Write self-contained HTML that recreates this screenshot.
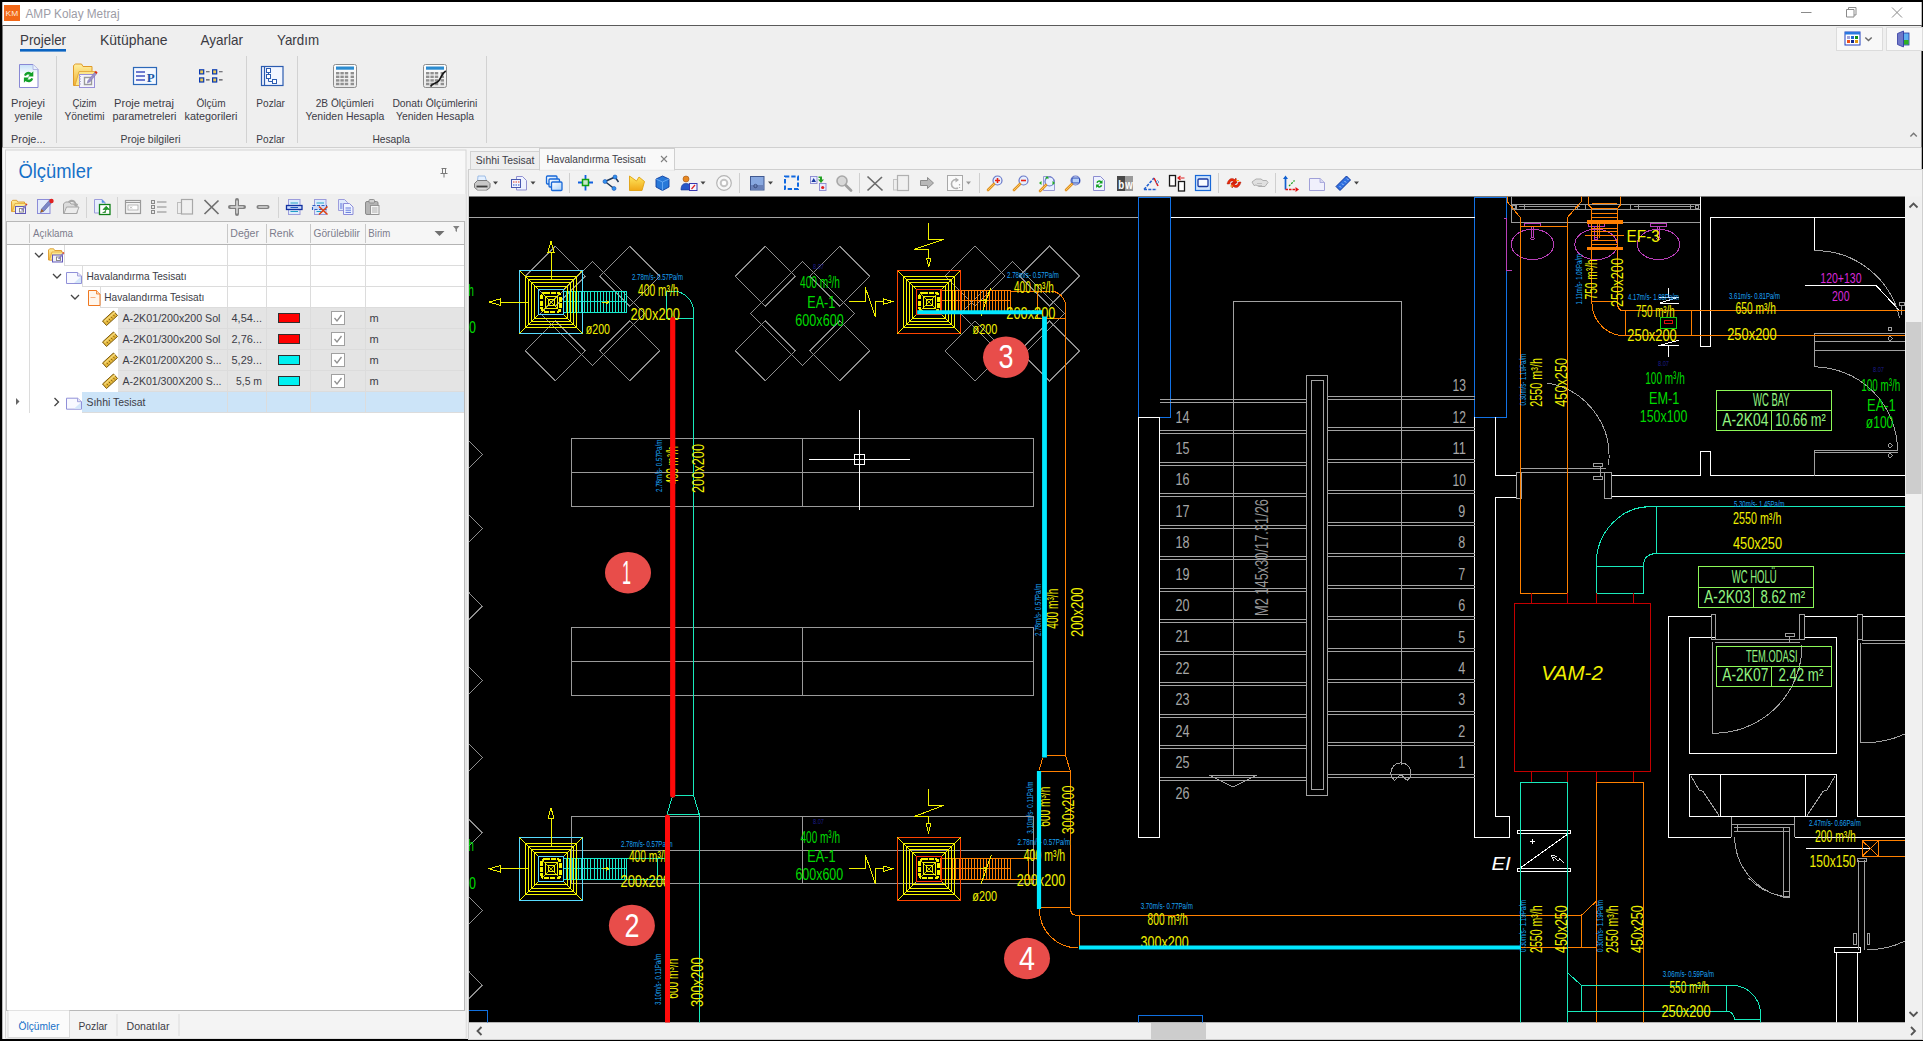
<!DOCTYPE html>
<html lang="tr"><head><meta charset="utf-8"><title>AMP Kolay Metraj</title>
<style>
html,body{margin:0;padding:0;background:#000;overflow:hidden}
body{width:1923px;height:1041px;position:relative;font-family:"Liberation Sans",sans-serif}
svg{position:absolute;left:0;top:0;display:block}
text{font-family:"Liberation Sans",sans-serif;white-space:pre}
.ui{font-size:11px;fill:#3c3c46}
.tab{font-size:14.5px;fill:#3a3a42}
.hd{font-size:11px;fill:#7c7c8c}
.c{font-size:14px}
.y{fill:#e8e800}.g{fill:#00d000}.b{fill:#1496e6}.w{fill:#a8a8a8}.m{fill:#d020d0}
</style></head><body>
<svg width="1923" height="1041" viewBox="0 0 1923 1041" shape-rendering="auto">
<!-- ===== window frame / title bar ===== -->
<rect x="0" y="0" width="1923" height="1041" fill="#000"/>
<rect x="2.5" y="2" width="1919" height="1037" fill="#efefef"/>
<rect x="2.5" y="2" width="1919" height="23" fill="#fff"/>
<rect x="2.5" y="25" width="1919" height="1" fill="#5a5a5a"/>
<rect x="4" y="5" width="16" height="16" fill="#f26818"/>
<text x="5.6" y="16.4" font-size="8" fill="#ffe9d8" textLength="12.6" lengthAdjust="spacingAndGlyphs">KM</text>
<text x="25.5" y="18" font-size="12" fill="#9c9ca6" textLength="94" lengthAdjust="spacingAndGlyphs">AMP Kolay Metraj</text>
<g stroke="#8a8a8a" stroke-width="1" fill="none">
<path d="M1801 12.5h10.5"/>
<path d="M1846.5 9.5h7.5v7.5h-7.5zM1848.5 9.5v-2h7.5v7.5h-2"/>
<path d="M1892 7.5l10 10M1902 7.5l-10 10"/>
</g>
<!-- top-right buttons -->
<rect x="1836.5" y="27.5" width="46" height="23" fill="#f8f8f8" stroke="#dcdcdc"/>
<rect x="1886.5" y="27.5" width="36" height="23" fill="#f8f8f8" stroke="#dcdcdc"/>
<rect x="1845" y="32" width="15" height="13" fill="#fff" stroke="#2040c0" stroke-width="1"/>
<rect x="1845" y="32" width="15" height="2.5" fill="#2a78e0"/>
<rect x="1847" y="36" width="3" height="3" fill="#a0a0d8"/><rect x="1851" y="36" width="3" height="3" fill="#2068d0"/><rect x="1855" y="36" width="3" height="3" fill="#109018"/>
<rect x="1847" y="40" width="3" height="3" fill="#f05018"/><rect x="1851" y="40" width="3" height="3" fill="#102890"/><rect x="1855" y="40" width="3" height="3" fill="#e09810"/>
<path d="M1865.3 37.5l3.2 3 3.2-3" stroke="#6a6a6a" stroke-width="1.5" fill="none"/>
<path d="M1897.5 33.5l6-2.5v16l-6-2.5z" fill="#7078c8" stroke="#3038a0" stroke-width=".8"/>
<rect x="1903.5" y="33" width="5.5" height="12" fill="#60b0f0" stroke="#2838a0" stroke-width=".8"/>
<rect x="1904" y="40" width="4.6" height="4.5" fill="#30b020"/>
<path d="M1910.4 133.5l3.2 3.2 3.2-3.2" transform="rotate(180 1913.6 135)" stroke="#777" stroke-width="1.4" fill="none"/>
<!-- ===== ribbon tabs ===== -->
<text class="tab" x="20" y="44.800" textLength="46" lengthAdjust="spacingAndGlyphs">Projeler</text>
<rect x="20" y="49" width="46" height="2.6" fill="#0a64c2"/>
<text class="tab" x="100" y="44.800" textLength="67.5" lengthAdjust="spacingAndGlyphs">Kütüphane</text>
<text class="tab" x="200.5" y="44.800" textLength="42.5" lengthAdjust="spacingAndGlyphs">Ayarlar</text>
<text class="tab" x="277" y="44.800" textLength="42" lengthAdjust="spacingAndGlyphs">Yardım</text>
<!-- ribbon separators -->
<g fill="#d2d2d2">
<rect x="56" y="56" width="1" height="87"/><rect x="246" y="56" width="1" height="87"/>
<rect x="297" y="56" width="1" height="87"/><rect x="486" y="56" width="1" height="87"/>
</g>
<rect x="2.5" y="147" width="1919" height="1" fill="#d0d0d0"/>
<rect x="2.5" y="148" width="1919" height="22" fill="#f4f4f4"/>
<!-- ribbon labels -->
<g class="ui">
<text x="11" y="107" textLength="34" lengthAdjust="spacingAndGlyphs">Projeyi</text>
<text x="14.5" y="120" textLength="28" lengthAdjust="spacingAndGlyphs">yenile</text>
<text x="11" y="143" textLength="34.5" lengthAdjust="spacingAndGlyphs">Proje...</text>
<text x="72.5" y="107" textLength="24" lengthAdjust="spacingAndGlyphs">Çizim</text>
<text x="64.5" y="120" textLength="40" lengthAdjust="spacingAndGlyphs">Yönetimi</text>
<text x="114" y="107" textLength="60" lengthAdjust="spacingAndGlyphs">Proje metraj</text>
<text x="112.5" y="120" textLength="64" lengthAdjust="spacingAndGlyphs">parametreleri</text>
<text x="196.5" y="107" textLength="29" lengthAdjust="spacingAndGlyphs">Ölçüm</text>
<text x="184.5" y="120" textLength="53" lengthAdjust="spacingAndGlyphs">kategorileri</text>
<text x="120.5" y="143" textLength="60" lengthAdjust="spacingAndGlyphs">Proje bilgileri</text>
<text x="256.3" y="107" textLength="28.6" lengthAdjust="spacingAndGlyphs">Pozlar</text>
<text x="256.3" y="143" textLength="28.6" lengthAdjust="spacingAndGlyphs">Pozlar</text>
<text x="315.7" y="107" textLength="58" lengthAdjust="spacingAndGlyphs">2B Ölçümleri</text>
<text x="305.5" y="120" textLength="78.8" lengthAdjust="spacingAndGlyphs">Yeniden Hesapla</text>
<text x="392.4" y="107" textLength="85" lengthAdjust="spacingAndGlyphs">Donatı Ölçümlerini</text>
<text x="396" y="120" textLength="78" lengthAdjust="spacingAndGlyphs">Yeniden Hesapla</text>
<text x="372.4" y="143" textLength="37.6" lengthAdjust="spacingAndGlyphs">Hesapla</text>
</g>
<!-- ===== ribbon icons ===== -->
<defs>
<linearGradient id="gdoc" x1="0" y1="0" x2="0" y2="1"><stop offset="0" stop-color="#c4e0f8"/><stop offset=".45" stop-color="#fff"/><stop offset="1" stop-color="#fff"/></linearGradient>
<linearGradient id="gfold" x1="0" y1="0" x2="0" y2="1"><stop offset="0" stop-color="#fff0a0"/><stop offset="1" stop-color="#f0b030"/></linearGradient>
<linearGradient id="gtab" x1="0" y1="0" x2="0" y2="1"><stop offset="0" stop-color="#fff"/><stop offset="1" stop-color="#e8e8e8"/></linearGradient>
</defs>
<!-- projeyi yenile -->
<path d="M19.5 64.5h13.5l5 5v18h-18.5z" fill="url(#gdoc)" stroke="#8888d4" stroke-width="1"/>
<path d="M33 64.5v5h5" fill="#e8f2fc" stroke="#a8a8e0" stroke-width=".8"/>
<path d="M24 75.2a4.6 4.6 0 0 1 7.6-2.2l1.7-1.7v5.3h-5.3l1.8-1.8a2.6 2.6 0 0 0-3.8 1.2z" fill="#12a028"/>
<path d="M33.2 78.8a4.6 4.6 0 0 1-7.6 2.2l-1.7 1.7v-5.3h5.3l-1.8 1.8a2.6 2.6 0 0 0 3.8-1.2z" fill="#12a028"/>
<!-- cizim yonetimi -->
<path d="M73.5 85.5v-20l2-1.5h6l1.5 2.5h9v19z" fill="url(#gfold)" stroke="#e09a28" stroke-width="1"/>
<path d="M75 85.5l4-14h16l-4 14z" fill="#fbe68c" stroke="#e0a030" stroke-width=".8"/>
<rect x="79.5" y="74.5" width="15" height="13" fill="#f4f4fa" stroke="#9a90d8" stroke-width="1"/>
<path d="M79 76.5h2M79 79h2M79 81.500h2M79 84h2" stroke="#b0a8d0" stroke-width="1"/>
<path d="M84.500 77.500h7v7h-7z" fill="#fff" stroke="#9a9a9a" stroke-width="1.400"/>
<path d="M88 80.500l7-8.500 1.800 1.600-7 8.500-2.600 1z" fill="#9a90c8" stroke="#7a70b0" stroke-width=".5"/>
<path d="M94.600 72.300l1.200-1.500 1.800 1.600-1.200 1.500z" fill="#e03010"/>
<!-- proje metraj parametreleri -->
<rect x="133.500" y="67.500" width="23" height="17" fill="#f4f8ff" stroke="#2c68b8" stroke-width="1.200"/>
<path d="M136 72h9M136 76h9M136 80h9" stroke="#4050c0" stroke-width="1.600"/>
<text x="146.800" y="81.800" style="font-family:'Liberation Serif',serif;font-weight:bold" font-size="13" fill="#1858a8">P</text>
<!-- olcum kategorileri -->
<g>
<rect x="199" y="69.200" width="5.300" height="5.300" fill="#0838b0"/><rect x="200.200" y="70.400" width="2.900" height="2.900" fill="#e8c858"/>
<rect x="212" y="69.200" width="5.300" height="5.300" fill="#0838b0"/><rect x="213.200" y="70.400" width="2.900" height="2.900" fill="#e8c858"/>
<rect x="199" y="77.300" width="5.300" height="5.300" fill="#0838b0"/><rect x="200.200" y="78.500" width="2.900" height="2.900" fill="#e8c858"/>
<rect x="212" y="77.300" width="5.300" height="5.300" fill="#0838b0"/><rect x="213.200" y="78.500" width="2.900" height="2.900" fill="#e8c858"/>
<path d="M206 71.800h3.600M219 71.800h3.600M206 79.900h3.600M219 79.900h3.600" stroke="#505058" stroke-width="1.100"/>
</g>
<!-- pozlar -->
<rect x="261.500" y="66.500" width="21.500" height="19" fill="#f2f6ff" stroke="#2c5cb0" stroke-width="1.200"/>
<path d="M264.500 66.500v19" stroke="#2c5cb0" stroke-width="1.200"/>
<g fill="#fff" stroke="#2c5cb0" stroke-width="1"><rect x="266.500" y="68.500" width="4" height="4"/><rect x="266.500" y="74.500" width="4" height="4"/><rect x="272.500" y="79.500" width="4" height="4"/></g>
<path d="M268.500 72.500v2M268.500 78.500v3h4" stroke="#2c5cb0" stroke-width="1" fill="none"/>
<!-- 2B olcumleri -->
<g id="tbl">
<rect x="333.500" y="64.500" width="23" height="23" rx="2" fill="url(#gtab)" stroke="#8c8c8c" stroke-width="1"/>
<rect x="336" y="66.500" width="18" height="3.200" fill="#2c8cd0"/>
<g fill="#909090">
<rect x="336" y="72" width="3.400" height="2.400"/><rect x="340.400" y="72" width="3.400" height="2.400"/><rect x="344.800" y="72" width="3.400" height="2.400"/><rect x="350.600" y="72" width="3.400" height="2.400"/>
<rect x="336" y="75.600" width="3.400" height="2.400"/><rect x="340.400" y="75.600" width="3.400" height="2.400"/><rect x="344.800" y="75.600" width="3.400" height="2.400"/><rect x="350.600" y="75.600" width="3.400" height="2.400"/>
<rect x="336" y="79.200" width="3.400" height="2.400"/><rect x="340.400" y="79.200" width="3.400" height="2.400"/><rect x="344.800" y="79.200" width="3.400" height="2.400"/><rect x="350.600" y="79.200" width="3.400" height="2.400"/>
<rect x="336" y="82.800" width="3.400" height="2.400"/><rect x="340.400" y="82.800" width="3.400" height="2.400"/><rect x="344.800" y="82.800" width="3.400" height="2.400"/><rect x="350.600" y="82.800" width="3.400" height="2.400"/>
</g></g>
<use href="#tbl" x="90"/>
<path d="M430.500 86.500c2.500-4 6-2.500 8.500-6s3-7.500 6.800-9.500" stroke="#181818" stroke-width="1.700" fill="none"/>
<!-- ===== left panel ===== -->
<rect x="2.5" y="148" width="3.500" height="891" fill="#fafafa"/>
<rect x="5.500" y="150" width="460.500" height="888" fill="#f8f8f8" stroke="#d4d4d4" stroke-width="1"/>
<text x="18.500" y="177.500" font-size="20" fill="#1670c8" textLength="73.500" lengthAdjust="spacingAndGlyphs">Ölçümler</text>
<path d="M441.500 168.500h5M442.500 168.500v4.500M445.500 168.500v4.500M440.500 173.500h7M444 173.500v4" stroke="#7a7a7a" stroke-width="1" fill="none"/>
<rect x="6" y="194" width="459.500" height="27" fill="#efefef"/>
<rect x="6.500" y="221.500" width="458" height="789" fill="#fff" stroke="#b8b8b8" stroke-width="1"/>
<rect x="7" y="222" width="457" height="22" fill="#f6f6f6"/>
<rect x="7" y="244" width="457" height="1" fill="#b4b4b4"/>
<g fill="#c8c8c8">
<rect x="29" y="224" width="1" height="19"/><rect x="227" y="224" width="1" height="19"/><rect x="266" y="224" width="1" height="19"/><rect x="310" y="224" width="1" height="19"/><rect x="365" y="224" width="1" height="19"/>
</g>
<g class="hd">
<text x="33" y="237" textLength="40" lengthAdjust="spacingAndGlyphs">Açıklama</text>
<text x="230.300" y="237" textLength="28.700" lengthAdjust="spacingAndGlyphs">Değer</text>
<text x="269.300" y="237" textLength="24.500" lengthAdjust="spacingAndGlyphs">Renk</text>
<text x="313.500" y="237" textLength="46.500" lengthAdjust="spacingAndGlyphs">Görülebilir</text>
<text x="368.300" y="237" textLength="22" lengthAdjust="spacingAndGlyphs">Birim</text>
</g>
<path d="M434.500 231h10l-5 5z" fill="#707070"/>
<path d="M453 226h6.500l-2.500 3v3l-1.500-1v-2z" fill="#808080"/>
<!-- row backgrounds -->
<rect x="118" y="308" width="346" height="84" fill="#e4e4e4"/>
<rect x="82" y="392" width="382" height="21" fill="#cce4f8"/>
<!-- grid lines -->
<g fill="#dcdcdc">
<rect x="64" y="265" width="400" height="1"/><rect x="82" y="286" width="382" height="1"/><rect x="100" y="307" width="364" height="1"/>
<rect x="118" y="328" width="346" height="1"/><rect x="118" y="349" width="346" height="1"/><rect x="118" y="370" width="346" height="1"/><rect x="118" y="391" width="346" height="1"/>
<rect x="82" y="412" width="382" height="1"/>
<rect x="227" y="245" width="1" height="168"/><rect x="266" y="245" width="1" height="168"/><rect x="310" y="245" width="1" height="168"/><rect x="365" y="245" width="1" height="168"/>
<rect x="29" y="245" width="1" height="168"/>
<rect x="64" y="245" width="1" height="21"/><rect x="82" y="266" width="1" height="21"/><rect x="100" y="287" width="1" height="21"/>
</g>
<!-- chevrons -->
<g stroke="#444" stroke-width="1.300" fill="none">
<path d="M35 253l4 4 4-4"/><path d="M53 274l4 4 4-4"/><path d="M71 295l4 4 4-4"/><path d="M54.500 398l4 4-4 4"/>
</g>
<path d="M16 398l3.500 3.500-3.500 3.500z" fill="#666"/>
<!-- row text -->
<g class="ui" fill="#32323c">
<text x="86.500" y="280" textLength="100" lengthAdjust="spacingAndGlyphs">Havalandırma Tesisatı</text>
<text x="104.300" y="301" textLength="100" lengthAdjust="spacingAndGlyphs">Havalandırma Tesisatı</text>
<text x="122.500" y="322" textLength="98" lengthAdjust="spacingAndGlyphs">A-2K01/200x200 Sol</text>
<text x="122.500" y="343" textLength="98" lengthAdjust="spacingAndGlyphs">A-2K01/300x200 Sol</text>
<text x="122.500" y="364" textLength="99" lengthAdjust="spacingAndGlyphs">A-2K01/200X200 S...</text>
<text x="122.500" y="385" textLength="99" lengthAdjust="spacingAndGlyphs">A-2K01/300X200 S...</text>
<text x="86.500" y="406" textLength="59" lengthAdjust="spacingAndGlyphs">Sıhhi Tesisat</text>
<text x="231.500" y="322" textLength="30.500" lengthAdjust="spacingAndGlyphs">4,54...</text>
<text x="231.500" y="343" textLength="30.500" lengthAdjust="spacingAndGlyphs">2,76...</text>
<text x="231.500" y="364" textLength="30.500" lengthAdjust="spacingAndGlyphs">5,29...</text>
<text x="236" y="385" textLength="26" lengthAdjust="spacingAndGlyphs">5,5 m</text>
<text x="369.500" y="322">m</text><text x="369.500" y="343">m</text><text x="369.500" y="364">m</text><text x="369.500" y="385">m</text>
</g>
<!-- swatches -->
<g stroke="#303030" stroke-width="1">
<rect x="278.500" y="313.500" width="21" height="9" fill="#ff0000"/><rect x="278.500" y="334.500" width="21" height="9" fill="#ff0000"/>
<rect x="278.500" y="355.500" width="21" height="9" fill="#00f0f0"/><rect x="278.500" y="376.500" width="21" height="9" fill="#00f0f0"/>
</g>
<!-- checkboxes -->
<g id="cb"><rect x="331.500" y="311.500" width="13" height="13" fill="#fff" stroke="#a0a0a0"/><path d="M334.500 318l2.500 3 4.500-6" stroke="#909090" stroke-width="1.300" fill="none"/></g>
<use href="#cb" y="21"/><use href="#cb" y="42"/><use href="#cb" y="63"/>
<!-- bottom tabs -->
<rect x="6" y="1011" width="459.500" height="27" fill="#f4f4f4"/>
<rect x="8" y="1011" width="61.500" height="26.500" fill="#fbfbfb" stroke="#dadada" stroke-width="1"/>
<rect x="8.500" y="1010.500" width="60.500" height="2" fill="#fbfbfb"/>
<rect x="116.500" y="1014" width="1" height="22" fill="#dcdcdc"/><rect x="178.500" y="1014" width="1" height="22" fill="#dcdcdc"/>
<text class="ui" x="18.500" y="1029.500" fill="#1670c8" style="fill:#1670c8" textLength="40.800" lengthAdjust="spacingAndGlyphs">Ölçümler</text>
<text class="ui" x="78.500" y="1029.500" textLength="29" lengthAdjust="spacingAndGlyphs">Pozlar</text>
<text class="ui" x="126.500" y="1029.500" textLength="43" lengthAdjust="spacingAndGlyphs">Donatılar</text>
<!-- ===== left panel toolbar icons ===== -->
<defs>
<g id="fold16"><path d="M.5 12.500v-10l1.200-1.200h4l1 1.700h6.800v9.500z" fill="url(#gfold)" stroke="#dc9828" stroke-width=".9"/>
<path d="M1.500 12.500l2.500-8h11l-2.500 8z" fill="#fbe890" stroke="#e0a030" stroke-width=".7"/>
<rect x="4.500" y="7.500" width="10" height="7" fill="#f0f0fa" stroke="#6058b8" stroke-width="1"/>
<rect x="8.500" y="9.500" width="4" height="3.500" fill="#fff" stroke="#808080" stroke-width=".9"/>
<path d="M10 11l4.500-5.500 1.300 1-4.500 5.500z" fill="#8a80c0"/><path d="M14.400 5.500l.8-1 1.300 1-.8 1z" fill="#e03818"/></g>
<g id="page16"><path d="M.5.5h11l4 3.500v7.500h-15z" fill="#f8f9ff" stroke="#9090d8" stroke-width="1"/><path d="M8 11l7-6.500v6.500z" fill="#d4e6fa"/><path d="M11.500.5v3.500h4" fill="#e4e4f4" stroke="#9090d8" stroke-width=".8"/></g>
<g id="ruler"><path d="M1 11.500l11-10 4 4.500-11 10z" fill="#e6b93c" stroke="#7a5a10" stroke-width="1"/><path d="M3 12l10.500-9.500" stroke="#f6dc80" stroke-width="1.200"/><path d="M5.200 11.300l1.400 1.600M7.400 9.300l1.400 1.600M9.600 7.300l1.400 1.600M11.800 5.300l1.400 1.600" stroke="#6a4808" stroke-width=".8"/></g>
</defs>
<use href="#fold16" x="11" y="199"/>
<!-- edit -->
<rect x="37.500" y="199.500" width="12.500" height="14" fill="#e4ecfa" stroke="#8c8cd8"/>
<path d="M40.500 212.500l1-3.500 8.500-9.500 2.500 2.200-8.500 9.500z" fill="#7c88c8" stroke="#5860a0" stroke-width=".6"/>
<path d="M40.500 212.500l1-3.500 2.300 2.200z" fill="#a86018"/><circle cx="51.500" cy="201" r="2.200" fill="#e02020"/>
<!-- open gray -->
<path d="M63.500 213.500v-9.500l2-2h4l1.500 2h6v9.500z" fill="#dcdcdc" stroke="#a0a0a0" stroke-width="1"/>
<path d="M64 213.500l2.500-6.500h12.500l-2.500 6.500z" fill="#ececec" stroke="#a0a0a0" stroke-width=".9"/>
<path d="M68 201.500c3-3 7.500-2 8.500 2.500l1.800-.3-2.300 3.300-2.800-2.500 1.700-.3c-.8-2.500-3.700-3-5.700-1.200z" fill="#a8a8a8"/>
<!-- import (page with green) -->
<path d="M94.500 199.500h7.500l3 3v10.500h-10.500z" fill="#e6eefc" stroke="#9c9cdc"/><path d="M102 199.500v3h3" fill="#4a8ce0" stroke="#6c9ce0" stroke-width=".6"/>
<rect x="99.500" y="204.500" width="10.500" height="10" fill="#fff" stroke="#108018" stroke-width="1.300"/>
<path d="M102.500 212.500h3v-3h-2.500l3.200-3.300 3.200 3.300h-1.800" fill="#20a028" stroke="#107018" stroke-width=".6"/>
<!-- seps -->
<rect x="86" y="197" width="1" height="21" fill="#d4d4d4"/><rect x="117" y="197" width="1" height="21" fill="#d4d4d4"/><rect x="278" y="197" width="1" height="21" fill="#d4d4d4"/>
<!-- window -->
<rect x="125.500" y="200.500" width="15" height="13" fill="#f4f4f4" stroke="#9a9a9a" stroke-width="1.200"/><path d="M125.500 202.500h15" stroke="#9a9a9a"/>
<rect x="128" y="205" width="10" height="5" fill="#fff" stroke="#a8a8a8" stroke-width=".8"/><path d="M130 206.500l2 2M132 206.500l-2 2" stroke="#a0a0a0" stroke-width=".7"/>
<!-- list -->
<g fill="#e8e8e8" stroke="#8a8a8a" stroke-width="1"><rect x="151.500" y="200.500" width="3" height="3"/><rect x="151.500" y="205.500" width="3" height="3"/><rect x="151.500" y="210.500" width="3" height="3"/></g>
<path d="M157 202h9.500M157 207h9.500M157 212h9.500" stroke="#8a8a8a" stroke-width="1.200"/>
<!-- copy gray -->
<rect x="177.500" y="202.500" width="10" height="11" fill="#eee" stroke="#bdbdbd"/><rect x="181.500" y="199.500" width="11" height="14.500" fill="#f0f0f0" stroke="#a8a8a8" stroke-width="1.200"/>
<!-- X -->
<path d="M204.500 200l14 14M218.500 200.500l-14 13.500" stroke="#707070" stroke-width="1.700" fill="none"/>
<!-- plus / minus -->
<path d="M237 200v14M230 207h14" stroke="#808080" stroke-width="4" stroke-linecap="round"/><path d="M237 201v12M231 207h12" stroke="#d8d8d8" stroke-width="1.600" stroke-linecap="round"/>
<path d="M258.500 207h9" stroke="#808080" stroke-width="4" stroke-linecap="round"/><path d="M259 207h8" stroke="#d8d8d8" stroke-width="1.600" stroke-linecap="round"/>
<!-- select row -->
<rect x="288.500" y="199.500" width="11.500" height="15" fill="#dcecfc" stroke="#9c9cdc"/><path d="M290.500 203h7.500M290.500 211.500h7.500" stroke="#20a0c8" stroke-width="1.200"/>
<rect x="286.500" y="205.500" width="15.500" height="4" fill="#c8d8f8" stroke="#1030a0" stroke-width="1.300"/><path d="M290.500 207.500h7.500" stroke="#2060c0" stroke-width="1"/>
<!-- delete row -->
<rect x="314.500" y="199.500" width="11.500" height="15" fill="#dcecfc" stroke="#9c9cdc"/><path d="M316.500 203h7.500M316.500 211.500h5" stroke="#20a0c8" stroke-width="1.200"/>
<rect x="312.500" y="205.500" width="14" height="4" fill="#c8d8f8" stroke="#3060c0" stroke-width="1.100" stroke-dasharray="3 1.500"/>
<path d="M319 206.500l8.500 8M327.500 206.500l-8.500 8" stroke="#e04010" stroke-width="1.500"/>
<!-- copy blue -->
<path d="M338.500 199.500h6l3 3v8h-9z" fill="#dfeafc" stroke="#9c9cdc"/><path d="M343.500 203.500h6l3.500 3.500v7.500h-9.500z" fill="#eef4ff" stroke="#8c8cd8"/>
<path d="M345.500 208h5.500M345.500 210.200h5.500M345.500 212.400h5.500M340 204h2.500M340 206h2.500M340 208h2.500" stroke="#5068d8" stroke-width=".9"/>
<!-- paste gray -->
<rect x="365.500" y="201.500" width="12.500" height="13" rx="1.500" fill="#b4b4b4" stroke="#8a8a8a"/><rect x="369" y="199.500" width="5.500" height="3.500" rx="1" fill="#d0d0d0" stroke="#8a8a8a" stroke-width=".9"/>
<rect x="370.500" y="205.500" width="8.500" height="9" fill="#f4f4f4" stroke="#909090" stroke-width=".9"/><path d="M372 208h5.500M372 210h5.500M372 212h5.500" stroke="#a0a0a0" stroke-width=".8"/>
<!-- ===== tree icons ===== -->
<use href="#fold16" x="48" y="247.500"/>
<use href="#page16" x="66" y="272"/>
<use href="#page16" x="66" y="397.700"/>
<path d="M88.500 290.500h8l3.500 3.500v11.500h-11.500z" fill="#fff6ec" stroke="#f07820" stroke-width="1"/><path d="M96.500 290.500v3.500h3.500" fill="#fbd8b8" stroke="#f07820" stroke-width=".8"/><path d="M90.500 297.500h5" stroke="#f8b080" stroke-width="1"/>
<use href="#ruler" x="101.500" y="309.500"/><use href="#ruler" x="101.500" y="330.500"/><use href="#ruler" x="101.500" y="351.500"/><use href="#ruler" x="101.500" y="372.500"/>
<!-- ===== right panel: tabs, toolbar, canvas ===== -->
<rect x="468.500" y="169.500" width="1454" height="870" fill="#f2f2f2" stroke="#cfcfcf"/>
<rect x="470.500" y="151.500" width="69" height="18" fill="#eeeeee" stroke="#d2d2d2"/>
<rect x="539.500" y="148.500" width="135" height="21.500" fill="#f9f9f9" stroke="#cfcfcf"/>
<rect x="540" y="169" width="134" height="1.500" fill="#f4f4f4"/>
<text class="ui" x="475.700" y="163.500" textLength="58.600" lengthAdjust="spacingAndGlyphs">Sıhhi Tesisat</text>
<text class="ui" x="546.600" y="163" textLength="99.500" lengthAdjust="spacingAndGlyphs">Havalandırma Tesisatı</text>
<path d="M661 156l6 6M667 156l-6 6" stroke="#808080" stroke-width="1.100"/>
<!-- canvas -->
<rect x="469" y="196.500" width="1436" height="826" fill="#000"/>
<!-- scrollbars -->
<rect x="1905" y="196.500" width="16.500" height="826" fill="#f0f0f0"/>
<rect x="469" y="1022.500" width="1452.500" height="16.500" fill="#f0f0f0"/>
<rect x="1906" y="322" width="15.500" height="172" fill="#cdcdcd"/>
<rect x="1151" y="1023" width="55" height="16" fill="#cdcdcd"/>
<g stroke="#555" stroke-width="1.800" fill="none">
<path d="M1909.500 207.500l4-4 4 4"/><path d="M1909.500 1012l4 4 4-4"/>
<path d="M481.500 1027l-4 4 4 4"/><path d="M1911 1027l4 4-4 4"/>
</g>
<!-- toolbar separators -->
<g fill="#cfcfcf"><rect x="569" y="173" width="1" height="20"/><rect x="739" y="173" width="1" height="20"/><rect x="859" y="173" width="1" height="20"/><rect x="979" y="173" width="1" height="20"/><rect x="1218" y="173" width="1" height="20"/><rect x="1275" y="173" width="1" height="20"/></g>
<!-- dropdown arrows -->
<g fill="#444"><path d="M493 181.500h5l-2.500 3z"/><path d="M530.500 181.500h5l-2.500 3z"/><path d="M700.500 181.500h5l-2.500 3z"/><path d="M768 181.500h5l-2.500 3z"/><path d="M966 181.500h5l-2.500 3z" fill="#999"/><path d="M1354 181.500h5l-2.500 3z"/></g>
<!-- ===== CAD toolbar icons ===== -->
<defs>
<linearGradient id="gblu" x1="0" y1="0" x2="1" y2="1"><stop offset="0" stop-color="#fff"/><stop offset="1" stop-color="#a8d0f8"/></linearGradient>
<linearGradient id="gyel" x1="0" y1="0" x2="0" y2="1"><stop offset="0" stop-color="#ffe860"/><stop offset="1" stop-color="#f0a818"/></linearGradient>
<g id="mag"><circle cx="10.500" cy="5.500" r="4.500" fill="#e8f0ff" stroke="#6878c8" stroke-width="1.200"/><path d="M7 9l-6 6" stroke="#e09020" stroke-width="2.600" stroke-linecap="round"/><path d="M7 9l-6 6" stroke="#f8c860" stroke-width="1" stroke-linecap="round"/></g>
</defs>
<!-- printer -->
<path d="M478 176h7l1.500 5h-9z" fill="#e4f0ff" stroke="#8cb0e0" stroke-width=".8"/>
<path d="M474.500 183.500l3-3h9.500l3 3v4l-3 2.500h-9.500l-3-2.500z" fill="#c8c8c8" stroke="#707070" stroke-width=".9"/>
<path d="M476.500 186.500h11" stroke="#404040" stroke-width="1.800"/><path d="M477.500 189h9" stroke="#f0f0f0" stroke-width="1"/>
<!-- copy w/ grid -->
<path d="M516.500 176.500h6l4 4v9.500h-10z" fill="#eef2ff" stroke="#9090d0" stroke-width="1"/>
<rect x="511.500" y="179.500" width="9" height="8" fill="#f4f4ff" stroke="#4858b0" stroke-width="1"/>
<path d="M513 182h1.500M515.500 182h1.500M518 182h1.500" stroke="#e04020" stroke-width="1.200"/><path d="M513 185h1.500M515.500 185h1.500M518 185h1.500" stroke="#2050c0" stroke-width="1.200"/>
<!-- windows -->
<rect x="546.500" y="176" width="10.500" height="8" rx="1" fill="url(#gblu)" stroke="#1868d8" stroke-width="1.300"/>
<rect x="549" y="179" width="10.500" height="8" rx="1" fill="url(#gblu)" stroke="#1868d8" stroke-width="1.300"/>
<rect x="551.500" y="182" width="10.500" height="8.500" rx="1" fill="url(#gblu)" stroke="#1868d8" stroke-width="1.300"/>
<!-- crosshair -->
<path d="M585.500 175v15.500M578 182.500h15" stroke="#1060e0" stroke-width="1.800"/><rect x="582.500" y="179.500" width="6" height="6" fill="#c8e8c8" stroke="#10a010" stroke-width="1.500"/>
<!-- nodes -->
<path d="M605 181.500l10-4.500M605 181.500l9 7M615 177l3.500 5" stroke="#203858" stroke-width="1.500" fill="none"/>
<circle cx="605" cy="181.500" r="2" fill="#3090f0" stroke="#1850b0" stroke-width=".6"/><circle cx="615" cy="177" r="2" fill="#3090f0" stroke="#1850b0" stroke-width=".6"/><circle cx="614" cy="188.500" r="2" fill="#3090f0" stroke="#1850b0" stroke-width=".6"/>
<!-- folder -->
<path d="M629.500 176l7 5 2.500-4 5.500 4.500-2.500 9h-12.500z" fill="url(#gyel)" stroke="#e0a010" stroke-width=".9"/>
<!-- cube -->
<path d="M662.500 176l6.500 3v8l-6.500 3.500-6.500-3.500v-8z" fill="#2878d8" stroke="#1040a0" stroke-width=".9"/><path d="M656 179l6.500 3 6.500-3M662.500 182v8.500" stroke="#70b0f8" stroke-width=".8" fill="none"/>
<!-- user -->
<circle cx="686" cy="179" r="3" fill="#e88820" stroke="#a05010" stroke-width=".6"/><path d="M681 190c0-5 2-6.500 5-6.500s5 1.500 5 6.500z" fill="#2858c8" stroke="#183890" stroke-width=".6"/>
<rect x="689.500" y="183.500" width="7.500" height="7" fill="#f4f4ff" stroke="#3838b0" stroke-width="1"/><path d="M691.500 189l3.500-4" stroke="#e02020" stroke-width="1.200"/>
<!-- circle -->
<circle cx="724" cy="183" r="7.300" fill="#f8f8f8" stroke="#b4b4b4" stroke-width="1.200"/><circle cx="724" cy="183" r="3.300" fill="#fff" stroke="#c4c4c4" stroke-width="2"/>
<!-- image -->
<rect x="750.500" y="176.500" width="13.500" height="13.500" fill="#88a8e0" stroke="#405890" stroke-width="1"/><path d="M751 185h12.500v4.500h-12.500z" fill="#6880b8"/><circle cx="755.500" cy="186" r="1.700" fill="none" stroke="#304070" stroke-width=".8"/>
<!-- dashed rect -->
<rect x="785" y="176.500" width="13" height="12.500" fill="none" stroke="#1068e0" stroke-width="2" stroke-dasharray="4.300 2"/>
<!-- swap -->
<rect x="810.500" y="176.500" width="6.500" height="7" fill="#e8ecff" stroke="#8888d0" stroke-width=".9"/><path d="M813.700 178l2.300 4h-4.600z" fill="#1838a0"/>
<rect x="819.500" y="183.500" width="6.500" height="7" fill="#e8ecff" stroke="#8888d0" stroke-width=".9"/><circle cx="822.700" cy="187.500" r="1.600" fill="#e02020"/>
<path d="M818.500 176.500h3.500v3h2l-3 3.500-3-3.500h2v-1.500h-1.500z" fill="#20a020"/>
<!-- magnifier gray -->
<circle cx="842" cy="181" r="5" fill="#d8d8d8" stroke="#a8a8a8" stroke-width="1.600"/><path d="M846 185.500l5 5" stroke="#a0a0a0" stroke-width="2.800" stroke-linecap="round"/>
<!-- X -->
<path d="M867.500 176.500l15 14M882 177l-14.500 13.500" stroke="#6c6c6c" stroke-width="1.700" fill="none"/>
<!-- copy gray -->
<rect x="893.500" y="179.500" width="10" height="10.500" fill="#eee" stroke="#c4c4c4"/><rect x="897.500" y="175.500" width="11" height="15" fill="#f0f0f0" stroke="#b0b0b0" stroke-width="1.200"/>
<!-- arrow -->
<path d="M920.500 180.500h7v-3l6 5.500-6 5.500v-3h-7z" fill="#b8b8b8" stroke="#8c8c8c" stroke-width="1"/>
<!-- rotate -->
<rect x="947.500" y="175.500" width="15" height="15" fill="#fafafa" stroke="#a8a8a8" stroke-width="1"/>
<path d="M958 188a4.500 4.500 0 1 1 0-8" fill="none" stroke="#b0b0b0" stroke-width="1.600"/><path d="M955.500 177.500l3.500 2.500-3.500 2.500z" fill="#b0b0b0"/><path d="M959.500 184v1.500M959.500 187v1" stroke="#b0b0b0" stroke-width="1.200"/>
<!-- zooms -->
<use href="#mag" x="987" y="175"/><path d="M995 180.500h5M997.500 178v5" stroke="#e82010" stroke-width="1.600"/>
<use href="#mag" x="1013" y="175"/><path d="M1021 180.500h5" stroke="#e82010" stroke-width="1.600"/>
<path d="M1043.500 176.500h7.500l3.500 3.500v10.500h-11z" fill="#e8f0ff" stroke="#9090d0" stroke-width=".9"/><use href="#mag" x="1039" y="176" transform="translate(0 0)"/>
<path d="M1039 183l2.500-2v4zM1055 183l-2.500-2v4zM1047 176l-2 2.500h4z" fill="#20b020"/>
<use href="#mag" x="1065" y="175"/><rect x="1072" y="178" width="7.500" height="5" rx="1" fill="#b8d0f8" stroke="#2848b0" stroke-width="1"/>
<!-- refresh doc -->
<path d="M1093.500 176.500h7l4 4v10h-11z" fill="#eef2ff" stroke="#8c8cd0" stroke-width="1"/>
<path d="M1096.300 182.500a3 3 0 0 1 5-1.300l1.200-1.200v3.500h-3.500l1.200-1.200a1.600 1.600 0 0 0-2.400.6z" fill="#10a020"/><path d="M1102.300 185.500a3 3 0 0 1-5 1.300l-1.200 1.200v-3.500h3.500l-1.200 1.200a1.600 1.600 0 0 0 2.400-.6z" fill="#10a020"/>
<!-- bw -->
<rect x="1117" y="176" width="8" height="15" fill="#484848"/><rect x="1125" y="176" width="8" height="15" fill="#9a9a9a"/>
<text x="1118.300" y="189" font-size="12" font-weight="bold" fill="#fff" textLength="6" lengthAdjust="spacingAndGlyphs">b</text><text x="1125.200" y="189" font-size="12" font-weight="bold" fill="#fff" textLength="7.500" lengthAdjust="spacingAndGlyphs">w</text>
<!-- triangle -->
<path d="M1144 189.500l10-11.500" stroke="#2060d0" stroke-width="1.600" stroke-dasharray="3 1.300"/><path d="M1144 189.500h13" stroke="#2060d0" stroke-width="1.600" stroke-dasharray="3 1.300"/><path d="M1154 178l4 8" stroke="#e02020" stroke-width="1.600"/>
<path d="M1157.500 180.500l1.500 1.500-1.500 1.500-1.500-1.500z" fill="none" stroke="#4090e0" stroke-width=".8"/>
<!-- compare -->
<rect x="1169.500" y="175.500" width="6" height="10.500" fill="#fff" stroke="#181818" stroke-width="1.300"/><rect x="1178.500" y="181.500" width="6" height="9.500" fill="#fff" stroke="#181818" stroke-width="1.300"/>
<path d="M1184.500 178h-6M1180.500 176l-2.500 2 2.500 2" stroke="#e02020" stroke-width="1.200" fill="none"/>
<!-- frame -->
<rect x="1195.500" y="175.500" width="15" height="15" fill="#cfe4fc" stroke="#1868d8" stroke-width="1.200"/><rect x="1198" y="179" width="10" height="7.500" rx="1" fill="#f8fbff" stroke="#1838a0" stroke-width="1.300"/>
<!-- red arrows -->
<path d="M1227 184c1-5 5-7 7.500-4.500l1.500-1.500 1 5-5 0 1.500-1.500c-1.500-1.300-3.500-.5-4 2.500z" fill="#e82808" stroke="#a01000" stroke-width=".4"/>
<path d="M1241 182c-1 5-5 7-7.500 4.500l-1.500 1.500-1-5 5 0-1.500 1.500c1.500 1.300 3.500.5 4-2.500z" fill="#e82808" stroke="#a01000" stroke-width=".4"/>
<path d="M1230 186l3 0M1236 180.500l3 0" stroke="#f8b020" stroke-width="1"/>
<!-- gray hand -->
<path d="M1252 182l4-3h5l2 1.500h3.500l1.500 2-3 4h-6l-3-1.500-2 .5z" fill="#e0e0e0" stroke="#a8a8a8" stroke-width=".9"/><path d="M1257 183.500h5M1258 185.500h4" stroke="#b8b8b8" stroke-width=".8"/>
<!-- axes -->
<path d="M1285.500 189.500v-12" stroke="#1060d0" stroke-width="1.700"/><path d="M1283 179l2.500-3.500 2.500 3.500z" fill="#1060d0"/>
<path d="M1285.500 189.500h11" stroke="#e01010" stroke-width="1.700" stroke-dasharray="2.500 1"/><path d="M1295.500 187l3.500 2.500-3.500 2.500z" fill="#e01010"/>
<path d="M1289 186l5.500-5.500" stroke="#10a010" stroke-width="1.200" stroke-dasharray="2 1.200"/>
<!-- doc -->
<path d="M1309.500 178.500h10.500l4.500 4v8h-15z" fill="#f0f0fc" stroke="#a0a0d8" stroke-width="1"/><path d="M1320 178.500v4h4.500" fill="#d8d8f0" stroke="#a0a0d8" stroke-width=".8"/>
<!-- ruler -->
<path d="M1336 186.500l10.500-10.500 4 4-10.500 10.500z" fill="#3070e0" stroke="#1038a0" stroke-width="1"/><path d="M1339.500 186l1.500 1.500M1342 183.500l1.500 1.500M1344.500 181l1.500 1.500M1347 178.500l1.500 1.500" stroke="#c0d8ff" stroke-width=".9"/>
<!-- ===== CAD: left region ===== -->
<defs><clipPath id="cv"><rect x="469" y="196.5" width="1436" height="826"/></clipPath>
<g id="dif" fill="none" stroke="#f6f600" stroke-width="1"><rect x="-25.5" y="-25.5" width="51.0" height="51.0"/><rect x="-22.4" y="-22.4" width="44.8" height="44.8"/><rect x="-19.3" y="-19.3" width="38.6" height="38.6"/><rect x="-16.1" y="-16.1" width="32.2" height="32.2"/><path d="M-31.5-31.5L-13-13M31.5-31.5L13-13M-31.5 31.5L-13 13M31.5 31.5L13 13"/><rect x="-9.5" y="-9.5" width="19" height="19" rx="3" stroke-width="2.2" stroke-dasharray="5 1.2"/><rect x="-6" y="-6" width="12" height="12" stroke-width="1"/><rect x="-3" y="-3" width="6" height="6"/><path d="M-9-9L9 9M9-9L-9 9" stroke-width=".8"/></g>
<g id="flex" fill="none" stroke-width="1"><rect x="0" y="-10.7" width="63.4" height="21.4"/><path d="M0 0h63.4"/><path d="M3.0-10.7v21.4M6.0-10.7v21.4M9.1-10.7v21.4M12.1-10.7v21.4M15.2-10.7v21.4M18.2-10.7v21.4M21.3-10.7v21.4M24.4-10.7v21.4M27.4-10.7v21.4M30.5-10.7v21.4M33.5-10.7v21.4M36.5-10.7v21.4M39.6-10.7v21.4M42.6-10.7v21.4M45.7-10.7v21.4M48.7-10.7v21.4M51.8-10.7v21.4M54.8-10.7v21.4M57.9-10.7v21.4M60.9-10.7v21.4"/></g>
<g id="flex2" fill="none" stroke-width="1"><rect x="0" y="-10.7" width="70" height="21.4"/><path d="M0 0h70"/><path d="M12.2-10.7v21.4M15.2-10.7v21.4M18.3-10.7v21.4M21.4-10.7v21.4M24.4-10.7v21.4M27.5-10.7v21.4M30.5-10.7v21.4M33.6-10.7v21.4M36.6-10.7v21.4M39.6-10.7v21.4M42.7-10.7v21.4M45.7-10.7v21.4M48.8-10.7v21.4M51.8-10.7v21.4M54.9-10.7v21.4M57.9-10.7v21.4M61.0-10.7v21.4M64.0-10.7v21.4M67.1-10.7v21.4"/></g>
</defs>
<g clip-path="url(#cv)" shape-rendering="crispEdges">
<path d="M469 217.5H1138.5" stroke="#a4a4a4" stroke-width="1" fill="none"/>
<path d="M555.3 246.1L585.3 276.1L555.3 306.1L525.3 276.1ZM555.3 320.9L585.3 350.9L555.3 380.9L525.3 350.9ZM629.7 246.1L659.7 276.1L629.7 306.1L599.7 276.1ZM629.7 320.9L659.7 350.9L629.7 380.9L599.7 350.9ZM592.5 261.5L644.5 313.5L592.5 365.5L540.5 313.5ZM765.3 246.1L795.3 276.1L765.3 306.1L735.3 276.1ZM765.3 320.9L795.3 350.9L765.3 380.9L735.3 350.9ZM839.7 246.1L869.7 276.1L839.7 306.1L809.7 276.1ZM839.7 320.9L869.7 350.9L839.7 380.9L809.7 350.9ZM802.5 261.5L854.5 313.5L802.5 365.5L750.5 313.5ZM975.1 246.1L1005.1 276.1L975.1 306.1L945.1 276.1ZM975.1 320.9L1005.1 350.9L975.1 380.9L945.1 350.9ZM1049.5 246.1L1079.5 276.1L1049.5 306.1L1019.5 276.1ZM1049.5 320.9L1079.5 350.9L1049.5 380.9L1019.5 350.9ZM1012.3 261.5L1064.3 313.5L1012.3 365.5L960.3 313.5ZM467 439.2L482.3 454.5L467 469.8M467 513.2L482.3 528.5L467 543.8M467 590.7L482.3 606L467 621.3M467 665.2L482.3 680.5L467 695.8M467 742.2L482.3 757.5L467 772.8M467 817.3L482.3 832.6L467 847.9M467 895.2L482.3 910.5L467 925.8M467 969.7L482.3 985L467 1000.3" fill="none" stroke="#8e8e8e" stroke-width="1"/>
<path d="M571.5 438.8H1033.5V506.4H571.5ZM571.5 472.6H1033.5M802.4 438.8V506.4M571.5 627.6H1033.5V695.2H571.5ZM571.5 661.4H1033.5M802.4 627.6V695.2M571.5 816.3H1033.5V883.9H571.5ZM571.5 850.1H1033.5M802.4 816.3V883.9" fill="none" stroke="#9a9a9a" stroke-width="1"/>
<path d="M859.2 409.5V510M809 459.5H909.7M854 454.2h10.5v10.5h-10.5z" fill="none" stroke="#fff" stroke-width="1"/>
<g fill="none" stroke="#18eabc" stroke-width="1">
<path d="M666.4 318.5V291.2H673.5A20.5 20.5 0 0 1 693.5 312V795.3M666.4 318.5H693.5"/>
<path d="M674 795.3H693.5M672.7 795.3L667 814.7M693.5 795.3L699.4 814.7M667 814.7H699.4M699.4 814.7V1023"/>
<path d="M626.8 858H665M626.8 879.6H665M657.4 858V879.6"/>
</g>
<use href="#flex" x="563.5" y="301.9" stroke="#18eacc"/><use href="#flex" x="563.5" y="868.8" stroke="#18eacc"/>
<g fill="none" stroke="#ff8000" stroke-width="1">
<path d="M1010.6 291H1050.4A15.6 15.6 0 0 1 1065.6 306.5V755.2M1037.7 291V318.8H1065.6"/>
<path d="M1047 755.2H1065.5M1042.6 758.5L1038.9 770.5M1065.5 755.2L1070.3 771M1038.9 771H1070.3V907.4M1039 907.2H1070.3"/>
<path d="M1039.5 909.5A38 38 0 0 0 1078 947.8M1070.3 907.4Q1070.5 915.2 1076 915.3H1520.5M1079.2 915.3V947.8"/>
<path d="M1010.5 858H1039M1010.5 879.6H1039M1028.8 858V879.6"/>
</g>
<use href="#flex2" x="940.6" y="300.8" stroke="#ff8000"/><use href="#flex2" x="940.8" y="868.8" stroke="#ff8000"/>
<rect x="519.2" y="270.3" width="63.6" height="63.6" fill="none" stroke="#58dcff" stroke-width="1"/>
<rect x="538.6" y="289.7" width="24.8" height="24.8" fill="none" stroke="#58dcff" stroke-width="1"/>
<use href="#dif" x="551" y="302.1"/>
<rect x="519.2" y="837.0" width="63.6" height="63.6" fill="none" stroke="#58dcff" stroke-width="1"/>
<rect x="538.6" y="856.4" width="24.8" height="24.8" fill="none" stroke="#58dcff" stroke-width="1"/>
<use href="#dif" x="551" y="868.8"/>
<rect x="897.2" y="270.3" width="63.6" height="63.6" fill="none" stroke="#ff4400" stroke-width="1"/>
<rect x="916.6" y="289.7" width="24.8" height="24.8" fill="none" stroke="#ff3000" stroke-width="1"/>
<use href="#dif" x="929" y="302.1"/>
<rect x="897.2" y="837.0" width="63.6" height="63.6" fill="none" stroke="#ff4400" stroke-width="1"/>
<rect x="916.6" y="856.4" width="24.8" height="24.8" fill="none" stroke="#ff3000" stroke-width="1"/>
<use href="#dif" x="929" y="868.8"/>
<g fill="none" stroke="#f2f200" stroke-width="1">
<path d="M551 280.3V251.8M548 252.0h6l-3-10.8zM528 302.1H500.6M500.6 298.8v6.6L489 302.1z"/>
<path d="M602 302.1h7M606 300.1l3 2-3 2" stroke-width=".9"/>
<path d="M551 847.0V818.5M548 818.7h6l-3-10.8zM528 868.8H500.6M500.6 865.5v6.6L489 868.8z"/>
<path d="M602 868.8h7M606 866.8l3 2-3 2" stroke-width=".9"/>
<path d="M849 301.6H865.3V287.6L875.4 316.6V301.6H883.7M883.7 299.0v5.2L892.6 301.6z"/>
<path d="M849 868.7H865.3V854.7L875.4 883.7V868.7H883.7M883.7 866.1v5.2L892.6 868.7z"/>
<path d="M928.8 222.8V239.2H944L913.7 249.6H928.8V258M926.6 258h4.4l-2.2 9z"/>
<path d="M928.5 789.3V805.3H943.8L914.3 816.5H928.5V823.6M926.3 823.6h4.400l-2.200 10z"/>
<path d="M990.7 287.600L981 316M991.4 854.700L981.2 883.500"/>
<path d="M980 300.800h7M984 298.800l3 2-3 2M980 868.800h7M984 866.800l3 2-3 2" stroke-width=".9"/>
</g>
<path d="M469 1010.700H487.600V1023" fill="none" stroke="#1070e0" stroke-width="1"/>
<path d="M1138 1023V1015.400H1202V1023" fill="none" stroke="#1070e0" stroke-width="1"/>
</g>
<!-- ===== CAD: stairs region ===== -->
<g clip-path="url(#cv)" fill="none" shape-rendering="crispEdges">
<path d="M1138.7 417.2V197H1170.5V417.2H1159.5M1474.5 197V417.2H1506.4V197Z" stroke="#1272e6" stroke-width="1"/>
<g stroke="#fff" stroke-width="1">
<path d="M1170.5 217.5H1474.5"/>
<path d="M1159.5 417.2H1138.7V837.3H1159.5V417.2"/>
<path d="M1474.5 417.2V837.3H1509V816.1H1495.8V497H1516.5M1495.8 417.2V475.5H1516.5"/>
</g>
<path d="M1233.1 775V301.4H1401.7V765M1306.3 795.4V375.5H1327.8V795.4ZM1311 789.4V380.5H1323V789.4ZM1159.5 399.2H1306.3M1159.5 402.4H1306.3M1327.8 396.2H1474.5M1327.8 399.3H1474.5M1159.5 430.7H1306.3M1159.5 433.9H1306.3M1327.8 427.7H1474.5M1327.8 430.8H1474.5M1159.5 462.2H1306.3M1159.5 465.4H1306.3M1327.8 459.2H1474.5M1327.8 462.3H1474.5M1159.5 493.7H1306.3M1159.5 496.9H1306.3M1327.8 490.7H1474.5M1327.8 493.8H1474.5M1159.5 525.2H1306.3M1159.5 528.4H1306.3M1327.8 522.2H1474.5M1327.8 525.3H1474.5M1159.5 556.7H1306.3M1159.5 559.9H1306.3M1327.8 553.7H1474.5M1327.8 556.8H1474.5M1159.5 588.2H1306.3M1159.5 591.4H1306.3M1327.8 585.2H1474.5M1327.8 588.3H1474.5M1159.5 619.7H1306.3M1159.5 622.9H1306.3M1327.8 616.7H1474.5M1327.8 619.8H1474.5M1159.5 651.2H1306.3M1159.5 654.4H1306.3M1327.8 648.2H1474.5M1327.8 651.3H1474.5M1159.5 682.7H1306.3M1159.5 685.9H1306.3M1327.8 679.7H1474.5M1327.8 682.8H1474.5M1159.5 714.2H1306.3M1159.5 717.4H1306.3M1327.8 711.2H1474.5M1327.8 714.3H1474.5M1159.5 745.7H1306.3M1159.5 748.9H1306.3M1327.8 742.7H1474.5M1327.8 745.8H1474.5M1159.5 777.2H1306.3M1159.5 780.4H1306.3M1327.8 774.2H1474.5M1327.8 777.3H1474.5M1209.4 775H1256.8L1233.1 786.9ZM1394.5 780.5A10 10 0 1 1 1407.3 780.5L1400.9 774.5Z" stroke="#a2a2a2" stroke-width="1"/>
</g>
<g clip-path="url(#cv)" font-size="17" fill="#a6a6a6">
<text x="1175.5" y="422.6" textLength="14" lengthAdjust="spacingAndGlyphs">14</text>
<text x="1175.5" y="454.0" textLength="14" lengthAdjust="spacingAndGlyphs">15</text>
<text x="1175.5" y="485.4" textLength="14" lengthAdjust="spacingAndGlyphs">16</text>
<text x="1175.5" y="516.8" textLength="14" lengthAdjust="spacingAndGlyphs">17</text>
<text x="1175.5" y="548.2" textLength="14" lengthAdjust="spacingAndGlyphs">18</text>
<text x="1175.5" y="579.6" textLength="14" lengthAdjust="spacingAndGlyphs">19</text>
<text x="1175.5" y="611.0" textLength="14" lengthAdjust="spacingAndGlyphs">20</text>
<text x="1175.5" y="642.4" textLength="14" lengthAdjust="spacingAndGlyphs">21</text>
<text x="1175.5" y="673.8" textLength="14" lengthAdjust="spacingAndGlyphs">22</text>
<text x="1175.5" y="705.2" textLength="14" lengthAdjust="spacingAndGlyphs">23</text>
<text x="1175.5" y="736.6" textLength="14" lengthAdjust="spacingAndGlyphs">24</text>
<text x="1175.5" y="768.0" textLength="14" lengthAdjust="spacingAndGlyphs">25</text>
<text x="1175.5" y="799.4" textLength="14" lengthAdjust="spacingAndGlyphs">26</text>
<text x="1452.6" y="391.3" textLength="13.4" lengthAdjust="spacingAndGlyphs">13</text>
<text x="1452.6" y="422.7" textLength="13.4" lengthAdjust="spacingAndGlyphs">12</text>
<text x="1452.6" y="454.1" textLength="13.4" lengthAdjust="spacingAndGlyphs">11</text>
<text x="1452.6" y="485.5" textLength="13.4" lengthAdjust="spacingAndGlyphs">10</text>
<text x="1458.2" y="516.9" textLength="7" lengthAdjust="spacingAndGlyphs">9</text>
<text x="1458.2" y="548.3" textLength="7" lengthAdjust="spacingAndGlyphs">8</text>
<text x="1458.2" y="579.7" textLength="7" lengthAdjust="spacingAndGlyphs">7</text>
<text x="1458.2" y="611.1" textLength="7" lengthAdjust="spacingAndGlyphs">6</text>
<text x="1458.2" y="642.5" textLength="7" lengthAdjust="spacingAndGlyphs">5</text>
<text x="1458.2" y="673.9" textLength="7" lengthAdjust="spacingAndGlyphs">4</text>
<text x="1458.2" y="705.3" textLength="7" lengthAdjust="spacingAndGlyphs">3</text>
<text x="1458.2" y="736.7" textLength="7" lengthAdjust="spacingAndGlyphs">2</text>
<text x="1458.2" y="768.1" textLength="7" lengthAdjust="spacingAndGlyphs">1</text>
<text transform="translate(1268.4 616) rotate(-90)" font-size="18" textLength="117" lengthAdjust="spacingAndGlyphs" fill="#969696">M2 145x30/17.31/26</text>
</g>
<!-- ===== CAD: right region ===== -->
<g clip-path="url(#cv)" fill="none" shape-rendering="crispEdges">
<g stroke="#9a9a9a" stroke-width="1">
<path d="M1511.2 196V222.7H1699.8M1511 204.5H1699.8M1511 209.5H1699.8M1519 206.8H1580M1634 206.8H1694" />
<path d="M1516 204.500v5M1524 204.500v5M1577 204.500v5M1585 204.500v5M1630 204.500v5M1638 204.500v5M1690 204.500v5" />
<circle cx="1697" cy="207" r="1.800"/><circle cx="1514" cy="207" r="1.800"/>
</g>
<g stroke="#b93fb9" stroke-width="1">
<ellipse cx="1532.5" cy="244.400" rx="21.200" ry="15.200"/>
<path d="M1524.5 223.500h16v2.500h-16zM1531.3 226v11h2.400v-11M1530.5 237.500a2 2 0 1 0 4 0"/>
<ellipse cx="1596" cy="244.400" rx="21.200" ry="15.200"/>
<path d="M1588 223.500h16v2.500h-16zM1594.8 226v11h2.400v-11M1594 237.500a2 2 0 1 0 4 0"/>
<ellipse cx="1658.5" cy="244.400" rx="21.200" ry="15.200"/>
<path d="M1650.5 223.500h16v2.500h-16zM1657.3 226v11h2.400v-11M1656.5 237.500a2 2 0 1 0 4 0"/>
<path d="M1506.700 218V270.700H1511.700M1503.500 218.500h3.200"/>
</g>
<g stroke="#fff" stroke-width="1">
<path d="M1700.500 196V346H1710.500V217.500H1906"/>
<path d="M1814.100 217.500V250.700"/>
<path d="M1611.100 475.500H1700.500V451.200H1710.500V475.500H1906M1611.100 496.700H1906"/>
<path d="M1805 285.100H1875.800L1899.500 310.600"/>
<path d="M1711 616.500H1668.500V837.300H1731M1794.600 837.300H1857.500M1804 616.500H1857.500"/>
<path d="M1715.200 637.700H1689.300V753.200H1836.600V637.700H1804"/>
<path d="M1689.300 774.400H1836.600V816.600H1689.300ZM1720.500 774.400V816.600M1805.400 774.400V816.600"/>
<path d="M1857.500 640V816.600H1906M1857.500 837.300H1906M1862 616.500H1906" />
<path d="M1834.400 947.400H1860.600V952.200H1834.400ZM1836.300 952.200V1023M1857.400 952.200V1023"/>
<path d="M1805.900 848.500H1869.500"/>
<path d="M1517 830.300H1570.700V833.500H1517ZM1517 868.500H1570.700V871.700H1517ZM1521.200 867.300L1567.400 834.300M1530 841h5M1532.500 838.500v5"/>
<path d="M1551 855l3 5.500M1551 855l5.500 1.500M1552.500 857l5 4 1.500-2.500 5 4.500" stroke-width=".9"/>
<path d="M1668.500 288V297M1658.500 297H1679.300L1659.800 303H1679M1657.800 345.600H1679.300M1679.300 340L1659 345.600M1668.500 345.600V356.800"/>
</g>
<g stroke="#a0a0a0" stroke-width="1">
<path d="M1814.100 250.700A86 86 0 0 1 1899.500 318"/>
<path d="M1814.100 333.800V366.800M1814.100 333.800H1906M1814.100 341.300H1906M1814.100 350.600H1906M1814.100 366.800A84 84 0 0 1 1897.500 450"/>
<path d="M1814.100 450V475.500M1814.100 450H1898.300M1814.100 452.600H1898.300"/>
<circle cx="1890.300" cy="445.500" r="1.800"/><circle cx="1890.300" cy="455.500" r="1.800"/><circle cx="1890.300" cy="329" r="1.800"/><circle cx="1890.300" cy="338.500" r="1.800"/>
<path d="M1899.500 302h5v3h-5zM1901 305v10"/>
<path d="M1547.400 383A74 74 0 0 1 1608.500 465"/>
<path d="M1516.200 472h5v26h-5zM1604.900 472h6.200v26h-6.200zM1521 468.700H1606M1521 472.500H1606M1593 463.500h9v3h-9zM1593 476.500h9v3h-9zM1600 466.500v10"/>
<path d="M1711 614.800h4.200v25h-4.200zM1799.600 614.800h4.400v25h-4.400zM1857.500 614.800h4.500v25h-4.500zM1715 639H1800M1715 642.700H1800M1862 640H1906M1862 643H1906"/>
<path d="M1712.200 642V733.200A88 88 0 0 0 1802 645"/>
<path d="M1785 633.500h9v2.500h-9zM1789 636v6"/>
<path d="M1860.300 643V742.400A95 95 0 0 0 1906 733.500"/>
<path d="M1691 776l8 14 4 1.500 16 24M1835 776l-8 14-4 1.500-16 24"/>
<path d="M1731 816.600V837.300M1794.600 816.600V837.300M1731 824.500H1794.600M1734 827.300H1790M1734 831H1790M1737 824.500v6.500"/>
<path d="M1734.700 837.300A62 62 0 0 0 1784.600 897.200M1783.900 827.300V897.200H1789.600V827.300M1783.900 891h5.700"/>
<path d="M1858.800 860V949.500M1864.500 860V949.500M1857 858h9v3h-9zM1853.500 933.700v11h2.500v-11zM1867 933.700v11h2.500v-11z"/>
<path d="M1867.500 949.500A80 80 0 0 0 1906 940.500"/>
<path d="M1748.500 878A62 62 0 0 0 1788.500 896.800"/>
</g>
<g stroke="#ff8000" stroke-width="1">
<path d="M1507.500 196V202L1520.200 217.500V593.100H1567.400V217.500L1581 202V196M1520.200 226.500H1567.400"/>
<path d="M1588.600 196V205L1591.900 208.500V301.900H1617.300V208.500L1620.600 205V196"/>
<path d="M1591.900 203.500H1617.300M1591.900 208.500H1617.300M1591.900 213H1617.300M1591.900 217.500H1617.300M1591.900 228H1617.300M1591.900 231.800H1617.300M1591.900 240H1617.300M1591.900 244H1617.300M1585 235.700H1623.600" stroke-width="1"/>
<path d="M1587.400 222H1622.800M1587.400 248.200H1622.800" stroke-width="3.200"/>
<path d="M1597 224v14M1599.500 224v14" stroke-width=".9"/>
<path d="M1591.900 301.900A33.700 33.700 0 0 0 1619.800 335.600H1906M1617.300 301.900Q1617.500 310.600 1623 310.600H1906M1625.300 310.600V335.600M1691 310.600V335.600"/>
<path d="M1596.600 1023V782.400H1643.600V1023"/>
<path d="M1500 915.200H1581.500V947.400M1521 947.400H1596.500M1581.500 915.200L1596.500 901"/>
<path d="M1862 840.500H1878.800V856.500H1862ZM1862 840.500L1878.800 856.500M1878.800 840.500L1862 856.500M1878.800 840.500H1906M1878.800 856.500H1906"/>
</g>
<g stroke="#18eabc" stroke-width="1">
<path d="M1906 506.700H1649.800A54 58 0 0 0 1596.100 564.900V593.100H1643.600V564.900Q1644 554 1656 553.600H1906M1656.600 506.700V553.600M1596.100 566.100H1643.600"/>
<path d="M1520.400 1023V782.400H1567.400V1023"/>
<path d="M1567.400 972.700L1581.500 985.300H1731.700A29 29 0 0 1 1760.500 1012V1023M1567.400 1011.200H1727Q1734 1012 1734.400 1019.400H1760.500M1581.500 985.300V1011.200M1726.400 985.300V1011.200"/>
</g>
<path d="M1514.500 603.500H1650.600V771.100H1514.500ZM1531.700 593V603.500M1567.400 593V603.500M1596.600 593V603.500M1633.600 593V603.500M1531.700 771.100V782.400M1567.400 771.100V782.400M1596.600 771.100V782.400M1633.600 771.100V782.400" stroke="#c40000" stroke-width="1"/>
<rect x="1660.300" y="317.600" width="16.500" height="10.400" stroke="#10d010" stroke-width="1"/><rect x="1664.800" y="320.600" width="7.500" height="3.200" stroke="#e01010" stroke-width="1"/>
<g stroke="#8cf858" stroke-width="1">
<path d="M1716.5 390.5H1831.6V430.5H1716.5ZM1716.5 410.5H1831.6M1771.4 410.5V430.5"/>
<path d="M1698.5 566.6H1813.9V607.3H1698.5ZM1698.5 587.3H1813.9M1753.4 587.3V607.3"/>
<path d="M1716.5 646.5H1831.6V686.4H1716.5ZM1716.5 666.5H1831.6M1771.4 666.5V686.4"/>
</g>
</g>
<!-- ===== CAD: texts ===== -->
<g clip-path="url(#cv)">
<text x="632" y="279.7" font-size="9.6" fill="#1aa2f6" textLength="51" lengthAdjust="spacingAndGlyphs">2.78m/s- 0.57Pa/m</text>
<text x="638" y="296" font-size="16.5" fill="#f0f000" textLength="40.6" lengthAdjust="spacingAndGlyphs">400 m³/h</text>
<text x="630.5" y="320.4" font-size="16.5" fill="#f0f000" textLength="49.5" lengthAdjust="spacingAndGlyphs">200x200</text>
<text x="585.7" y="334.3" font-size="15.5" fill="#f0f000" textLength="24.3" lengthAdjust="spacingAndGlyphs">ø200</text>
<text x="800" y="287.7" font-size="17" fill="#00dc00" textLength="40" lengthAdjust="spacingAndGlyphs">400 m³/h</text>
<text x="807.3" y="307.6" font-size="17" fill="#00dc00" textLength="28" lengthAdjust="spacingAndGlyphs">EA-1</text>
<text x="795.3" y="326" font-size="17" fill="#00dc00" textLength="48.4" lengthAdjust="spacingAndGlyphs">600x600</text>
<text x="1007" y="277.6" font-size="9.6" fill="#1aa2f6" textLength="52" lengthAdjust="spacingAndGlyphs">2.78m/s- 0.57Pa/m</text>
<text x="1014" y="293.2" font-size="16.5" fill="#f0f000" textLength="39.8" lengthAdjust="spacingAndGlyphs">400 m³/h</text>
<text x="1006.3" y="318.8" font-size="16.5" fill="#f0f000" textLength="49.2" lengthAdjust="spacingAndGlyphs">200x200</text>
<text x="972.5" y="334" font-size="15.5" fill="#f0f000" textLength="24.8" lengthAdjust="spacingAndGlyphs">ø200</text>
<text x="621" y="847" font-size="9.6" fill="#1aa2f6" textLength="51.6" lengthAdjust="spacingAndGlyphs">2.78m/s- 0.57Pa/m</text>
<text x="628.9" y="862.3" font-size="16.5" fill="#f0f000" textLength="40.5" lengthAdjust="spacingAndGlyphs">400 m³/h</text>
<text x="620.5" y="887.3" font-size="16.5" fill="#f0f000" textLength="49.5" lengthAdjust="spacingAndGlyphs">200x200</text>
<text x="800.5" y="842.7" font-size="17" fill="#00dc00" textLength="39.5" lengthAdjust="spacingAndGlyphs">400 m³/h</text>
<text x="807.3" y="862.3" font-size="17" fill="#00dc00" textLength="28.3" lengthAdjust="spacingAndGlyphs">EA-1</text>
<text x="795.4" y="880.2" font-size="17" fill="#00dc00" textLength="47.8" lengthAdjust="spacingAndGlyphs">600x600</text>
<text x="1017.6" y="844.7" font-size="9.6" fill="#1aa2f6" textLength="52.7" lengthAdjust="spacingAndGlyphs">2.78m/s- 0.57Pa/m</text>
<text x="1023.7" y="860.5" font-size="16.5" fill="#f0f000" textLength="41.5" lengthAdjust="spacingAndGlyphs">400 m³/h</text>
<text x="1016.8" y="886" font-size="16.5" fill="#f0f000" textLength="48.4" lengthAdjust="spacingAndGlyphs">200x200</text>
<text x="972.3" y="900.5" font-size="15.5" fill="#f0f000" textLength="24.9" lengthAdjust="spacingAndGlyphs">ø200</text>
<text x="1140.7" y="908.5" font-size="9.6" fill="#1aa2f6" textLength="52.2" lengthAdjust="spacingAndGlyphs">3.70m/s- 0.77Pa/m</text>
<text x="1147.5" y="924.7" font-size="16.5" fill="#f0f000" textLength="40.4" lengthAdjust="spacingAndGlyphs">800 m³/h</text>
<text x="1140.5" y="948.4" font-size="16.5" fill="#f0f000" textLength="48.2" lengthAdjust="spacingAndGlyphs">300x200</text>
<text x="813" y="268.5" font-size="7" fill="#1c1c8c" textLength="11" lengthAdjust="spacingAndGlyphs">8.07</text>
<text x="813" y="824" font-size="7" fill="#1c1c8c" textLength="11" lengthAdjust="spacingAndGlyphs">8.07</text>
<text x="1658" y="366" font-size="7" fill="#1c1c8c" textLength="11" lengthAdjust="spacingAndGlyphs">8.07</text>
<text x="1873" y="372" font-size="7" fill="#1c1c8c" textLength="11" lengthAdjust="spacingAndGlyphs">8.07</text>
<text x="1626.6" y="241.9" font-size="16" fill="#f0f000" textLength="33.2" lengthAdjust="spacingAndGlyphs">EF-3</text>
<text x="1628" y="300.1" font-size="9.6" fill="#1aa2f6" textLength="51" lengthAdjust="spacingAndGlyphs">4.17m/s- 1.08Pa/m</text>
<text x="1636" y="316.9" font-size="16.5" fill="#f0f000" textLength="38.8" lengthAdjust="spacingAndGlyphs">750 m³/h</text>
<text x="1627.3" y="341.3" font-size="16.5" fill="#f0f000" textLength="49.5" lengthAdjust="spacingAndGlyphs">250x200</text>
<text x="1729" y="298.9" font-size="9.6" fill="#1aa2f6" textLength="51.1" lengthAdjust="spacingAndGlyphs">3.61m/s- 0.81Pa/m</text>
<text x="1735.5" y="314.4" font-size="16.5" fill="#f0f000" textLength="40.4" lengthAdjust="spacingAndGlyphs">650 m³/h</text>
<text x="1727.2" y="339.8" font-size="16.5" fill="#f0f000" textLength="49.5" lengthAdjust="spacingAndGlyphs">250x200</text>
<text x="1820.3" y="283.1" font-size="15.5" fill="#d828d8" textLength="41.2" lengthAdjust="spacingAndGlyphs">120+130</text>
<text x="1832" y="300.6" font-size="15.5" fill="#d828d8" textLength="17.6" lengthAdjust="spacingAndGlyphs">200</text>
<text x="1645.3" y="383.8" font-size="17" fill="#00dc00" textLength="39.5" lengthAdjust="spacingAndGlyphs">100 m³/h</text>
<text x="1649" y="403.7" font-size="17" fill="#00dc00" textLength="30.3" lengthAdjust="spacingAndGlyphs">EM-1</text>
<text x="1639.8" y="421.7" font-size="17" fill="#00dc00" textLength="47.5" lengthAdjust="spacingAndGlyphs">150x100</text>
<text x="1861.3" y="390.5" font-size="17" fill="#00dc00" textLength="38.9" lengthAdjust="spacingAndGlyphs">100 m³/h</text>
<text x="1867" y="410.5" font-size="17" fill="#00dc00" textLength="28.8" lengthAdjust="spacingAndGlyphs">EA-1</text>
<text x="1865.8" y="428" font-size="17" fill="#00dc00" textLength="27.5" lengthAdjust="spacingAndGlyphs">ø100</text>
<text x="1753" y="405.5" font-size="17.5" fill="#92f480" textLength="36.6" lengthAdjust="spacingAndGlyphs">WC BAY</text>
<text x="1722.2" y="426" font-size="18" fill="#92f480" textLength="46.2" lengthAdjust="spacingAndGlyphs">A-2K04</text>
<text x="1775.2" y="426" font-size="18" fill="#92f480" textLength="50.6" lengthAdjust="spacingAndGlyphs">10.66 m²</text>
<text x="1734" y="507.4" font-size="9.6" fill="#1aa2f6" textLength="50.6" lengthAdjust="spacingAndGlyphs">5.30m/s- 1.45Pa/m</text>
<text x="1733" y="523.6" font-size="16.5" fill="#f0f000" textLength="48.4" lengthAdjust="spacingAndGlyphs">2550 m³/h</text>
<text x="1733" y="548.6" font-size="16.5" fill="#f0f000" textLength="49.1" lengthAdjust="spacingAndGlyphs">450x250</text>
<text x="1731.7" y="582.8" font-size="18" fill="#92f480" textLength="45" lengthAdjust="spacingAndGlyphs">WC HOLÜ</text>
<text x="1704" y="602.8" font-size="18" fill="#92f480" textLength="46.4" lengthAdjust="spacingAndGlyphs">A-2K03</text>
<text x="1760.4" y="602.8" font-size="18" fill="#92f480" textLength="44.7" lengthAdjust="spacingAndGlyphs">8.62 m²</text>
<text x="1746" y="661.7" font-size="17" fill="#92f480" textLength="51.6" lengthAdjust="spacingAndGlyphs">TEM.ODASI</text>
<text x="1722.2" y="681.4" font-size="18" fill="#92f480" textLength="46.2" lengthAdjust="spacingAndGlyphs">A-2K07</text>
<text x="1778.4" y="681.4" font-size="18" fill="#92f480" textLength="44.9" lengthAdjust="spacingAndGlyphs">2.42 m²</text>
<text x="1541.2" y="679.7" font-size="21" fill="#f0f000" textLength="61.7" lengthAdjust="spacingAndGlyphs" font-style="italic">VAM-2</text>
<text x="1491.5" y="870.3" font-size="19" fill="#ffffff" textLength="19.3" lengthAdjust="spacingAndGlyphs" font-style="italic">EI</text>
<text x="1808.9" y="825.6" font-size="9.6" fill="#1aa2f6" textLength="51.9" lengthAdjust="spacingAndGlyphs">2.47m/s- 0.66Pa/m</text>
<text x="1815.1" y="841.8" font-size="16.5" fill="#f0f000" textLength="40.7" lengthAdjust="spacingAndGlyphs">200 m³/h</text>
<text x="1809.6" y="866.8" font-size="16.5" fill="#f0f000" textLength="46.2" lengthAdjust="spacingAndGlyphs">150x150</text>
<text x="1662.8" y="976.5" font-size="9.6" fill="#1aa2f6" textLength="51.4" lengthAdjust="spacingAndGlyphs">3.06m/s- 0.59Pa/m</text>
<text x="1669.5" y="992.7" font-size="16.5" fill="#f0f000" textLength="39.5" lengthAdjust="spacingAndGlyphs">550 m³/h</text>
<text x="1661.5" y="1017.3" font-size="16.5" fill="#f0f000" textLength="49.1" lengthAdjust="spacingAndGlyphs">250x200</text>
<text x="434" y="296" font-size="17" fill="#00dc00" textLength="40" lengthAdjust="spacingAndGlyphs">400 m³/h</text>
<text x="428" y="333" font-size="17" fill="#00dc00" textLength="48" lengthAdjust="spacingAndGlyphs">600x600</text>
<text x="434" y="851" font-size="17" fill="#00dc00" textLength="40" lengthAdjust="spacingAndGlyphs">400 m³/h</text>
<text x="428" y="889" font-size="17" fill="#00dc00" textLength="48" lengthAdjust="spacingAndGlyphs">600x600</text>
<text transform="translate(662.3 492) rotate(-90)" font-size="9.6" fill="#1aa2f6" textLength="52.4" lengthAdjust="spacingAndGlyphs">2.78m/s- 0.57Pa/m</text>
<text transform="translate(678.4 484.3) rotate(-90)" font-size="16.5" fill="#f0f000" textLength="38.3" lengthAdjust="spacingAndGlyphs">400 m³/h</text>
<text transform="translate(703.7 493) rotate(-90)" font-size="17" fill="#f0f000" textLength="49" lengthAdjust="spacingAndGlyphs">200x200</text>
<text transform="translate(1040.5 636) rotate(-90)" font-size="9.6" fill="#1aa2f6" textLength="52.3" lengthAdjust="spacingAndGlyphs">2.78m/s- 0.57Pa/m</text>
<text transform="translate(1057.6 628.7) rotate(-90)" font-size="16.5" fill="#f0f000" textLength="40" lengthAdjust="spacingAndGlyphs">400 m³/h</text>
<text transform="translate(1082.6 637) rotate(-90)" font-size="17" fill="#f0f000" textLength="49.5" lengthAdjust="spacingAndGlyphs">200x200</text>
<text transform="translate(661.4 1005) rotate(-90)" font-size="9.6" fill="#1aa2f6" textLength="51" lengthAdjust="spacingAndGlyphs">3.10m/s- 0.11Pa/m</text>
<text transform="translate(677.7 998.8) rotate(-90)" font-size="16.5" fill="#f0f000" textLength="40.3" lengthAdjust="spacingAndGlyphs">600 m³/h</text>
<text transform="translate(702.7 1007) rotate(-90)" font-size="17" fill="#f0f000" textLength="49.7" lengthAdjust="spacingAndGlyphs">300x200</text>
<text transform="translate(1033 833.8) rotate(-90)" font-size="9.6" fill="#1aa2f6" textLength="52.2" lengthAdjust="spacingAndGlyphs">3.10m/s- 0.11Pa/m</text>
<text transform="translate(1050 826.7) rotate(-90)" font-size="16.5" fill="#f0f000" textLength="40" lengthAdjust="spacingAndGlyphs">600 m³/h</text>
<text transform="translate(1074 834.3) rotate(-90)" font-size="17" fill="#f0f000" textLength="48.9" lengthAdjust="spacingAndGlyphs">300x200</text>
<text transform="translate(1581.5 304.4) rotate(-90)" font-size="9.6" fill="#1aa2f6" textLength="50.4" lengthAdjust="spacingAndGlyphs">1.11m/s- 1.08Pa/m</text>
<text transform="translate(1597.4 299.4) rotate(-90)" font-size="16.5" fill="#f0f000" textLength="40" lengthAdjust="spacingAndGlyphs">750 m³/h</text>
<text transform="translate(1623 307) rotate(-90)" font-size="17" fill="#f0f000" textLength="49" lengthAdjust="spacingAndGlyphs">250x200</text>
<text transform="translate(1526 405.5) rotate(-90)" font-size="9.6" fill="#1aa2f6" textLength="51.7" lengthAdjust="spacingAndGlyphs">0.30m/s- 1.19Pa/m</text>
<text transform="translate(1542.4 406.7) rotate(-90)" font-size="16.5" fill="#f0f000" textLength="48.7" lengthAdjust="spacingAndGlyphs">2550 m³/h</text>
<text transform="translate(1567.4 406.7) rotate(-90)" font-size="16.5" fill="#f0f000" textLength="48.7" lengthAdjust="spacingAndGlyphs">450x250</text>
<text transform="translate(1526.2 952) rotate(-90)" font-size="9.6" fill="#1aa2f6" textLength="52" lengthAdjust="spacingAndGlyphs">0.30m/s- 1.19Pa/m</text>
<text transform="translate(1542 953) rotate(-90)" font-size="16.5" fill="#f0f000" textLength="47.7" lengthAdjust="spacingAndGlyphs">2550 m³/h</text>
<text transform="translate(1567.4 953) rotate(-90)" font-size="16.5" fill="#f0f000" textLength="47.7" lengthAdjust="spacingAndGlyphs">450x250</text>
<text transform="translate(1602.5 952) rotate(-90)" font-size="9.6" fill="#1aa2f6" textLength="52" lengthAdjust="spacingAndGlyphs">0.30m/s- 1.19Pa/m</text>
<text transform="translate(1618 953) rotate(-90)" font-size="16.5" fill="#f0f000" textLength="47.7" lengthAdjust="spacingAndGlyphs">2550 m³/h</text>
<text transform="translate(1643 953) rotate(-90)" font-size="16.5" fill="#f0f000" textLength="47.7" lengthAdjust="spacingAndGlyphs">450x250</text>
</g>
<!-- ===== CAD: highlights + markers ===== -->
<g clip-path="url(#cv)"><g fill="none" stroke-linecap="round">
<path d="M672.7 319.500V795" stroke="#ff0a0a" stroke-width="5.200"/>
<path d="M667.500 817V1025" stroke="#ff0a0a" stroke-width="5"/>
<path d="M917.200 312.200H1042" stroke="#00e8ff" stroke-width="3.900" stroke-linecap="butt"/>
<path d="M1044.500 316.500V757.500" stroke="#00e8ff" stroke-width="4.800" stroke-linecap="butt"/>
<path d="M1039 771V909" stroke="#00e8ff" stroke-width="4.200" stroke-linecap="butt"/>
<path d="M1079 947.600H1521" stroke="#00e8ff" stroke-width="4" stroke-linecap="butt"/>
</g>
<ellipse cx="628" cy="572.7" rx="23" ry="20.7" fill="#e84d4a"/>
<text x="622.0" y="583.9" font-size="32.5" fill="#fff" textLength="9" lengthAdjust="spacingAndGlyphs">1</text>
<ellipse cx="631.9" cy="925.4" rx="23" ry="20.7" fill="#e84d4a"/>
<text x="624.4" y="936.6" font-size="32.5" fill="#fff" textLength="15" lengthAdjust="spacingAndGlyphs">2</text>
<ellipse cx="1006" cy="357.2" rx="23" ry="20.7" fill="#e84d4a"/>
<text x="998.5" y="368.4" font-size="32.5" fill="#fff" textLength="15" lengthAdjust="spacingAndGlyphs">3</text>
<ellipse cx="1027" cy="958.5" rx="23" ry="20.7" fill="#e84d4a"/>
<text x="1019.0" y="969.7" font-size="32.5" fill="#fff" textLength="16" lengthAdjust="spacingAndGlyphs">4</text>
</g>
</svg>
</body></html>
